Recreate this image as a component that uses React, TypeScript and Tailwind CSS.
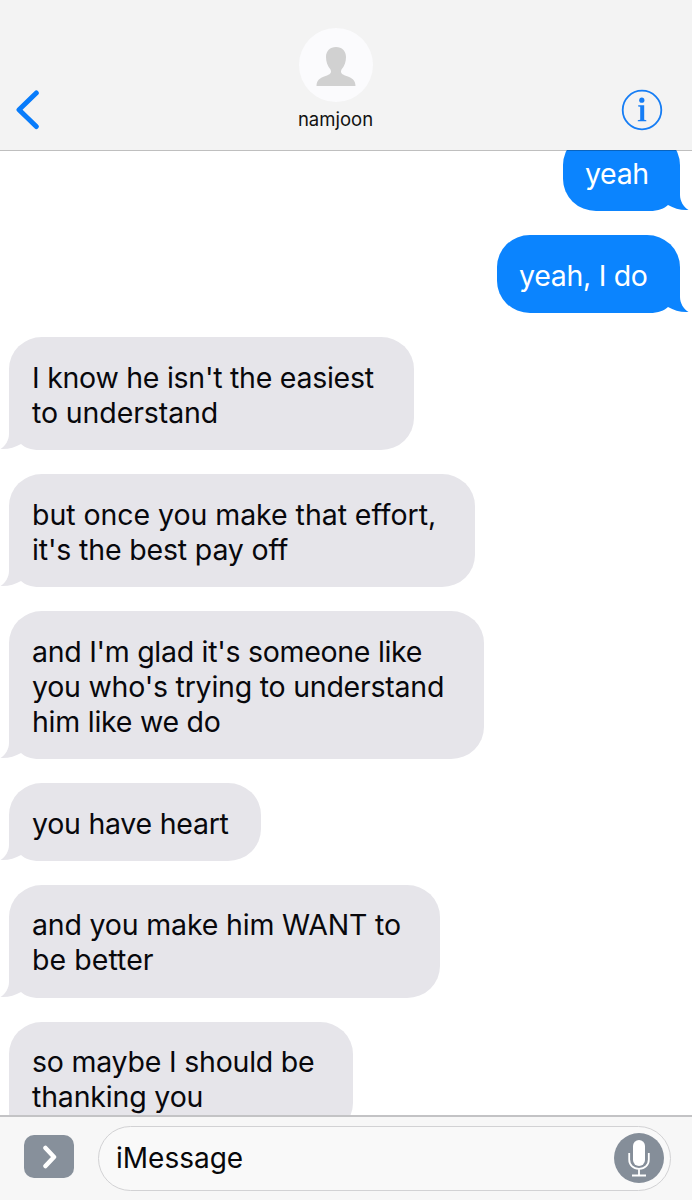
import { ReactNode } from "react";

type Line = { text: string; className: string };

type Message = {
  mine?: boolean;
  size: string;
  lines: Line[];
};

const messages: Message[] = [
  {
    mine: true,
    size: "w-[117px] pt-[23px] pb-5",
    lines: [{ text: "yeah", className: "tracking-[-0.35px]" }],
  },
  {
    mine: true,
    size: "w-[183px] pt-[23px] pb-5",
    lines: [{ text: "yeah, I do", className: "tracking-[-0.3px]" }],
  },
  {
    size: "w-[405px] pt-[23px] pb-5",
    lines: [
      { text: "I know he isn't the easiest", className: "tracking-[-0.26px]" },
      { text: "to understand", className: "tracking-[-0.1px]" },
    ],
  },
  {
    size: "w-[466px] pt-[23px] pb-5",
    lines: [
      { text: "but once you make that effort,", className: "tracking-[-0.05px]" },
      { text: "it's the best pay off", className: "tracking-[-0.16px]" },
    ],
  },
  {
    size: "w-[475px] pt-[23px] pb-5",
    lines: [
      { text: "and I'm glad it's someone like", className: "tracking-[-0.29px]" },
      { text: "you who's trying to understand", className: "tracking-[-0.23px]" },
      { text: "him like we do", className: "tracking-[-0.25px]" },
    ],
  },
  {
    size: "w-[252px] pt-[23px] pb-5",
    lines: [{ text: "you have heart", className: "tracking-[-0.25px]" }],
  },
  {
    size: "w-[431px] pt-[22px] pb-[21px]",
    lines: [
      { text: "and you make him WANT to", className: "tracking-[-0.18px]" },
      { text: "be better", className: "tracking-[0.05px]" },
    ],
  },
  {
    size: "w-[344px] pt-[22px] pb-[21px]",
    lines: [
      { text: "so maybe I should be", className: "tracking-[-0.22px]" },
      { text: "thanking you", className: "tracking-[-0.17px]" },
    ],
  },
];

function Tail({ mine }: { mine?: boolean }) {
  return (
    <svg
      viewBox="0 0 44 40"
      className={
        mine
          ? "absolute -right-[9px] bottom-0 h-10 w-11 -scale-x-100 text-[#0b84fe]"
          : "absolute bottom-0 -left-[9px] h-10 w-11 text-[#e6e5ea]"
      }
    >
      <path
        d="M9 0V24C9 30 5.500 36 0.5 39C8 39.500 15 37.500 21 34C25 37.500 30 40 40 40H44V0Z"
        fill="currentColor"
      />
    </svg>
  );
}

function Bubble({ mine, size, children }: { mine?: boolean; size: string; children: ReactNode }) {
  return (
    <div
      className={`relative shrink-0 rounded-[33px/32px] text-[28.5px] leading-[35px] whitespace-nowrap ${size} ${
        mine
          ? "mr-3 self-end bg-[#0b84fe] pl-[22px] text-white"
          : "ml-[9px] bg-[#e6e5ea] pl-[23px] text-[#08080c]"
      }`}
    >
      <Tail mine={mine} />
      <div className="relative">{children}</div>
    </div>
  );
}

function Header() {
  return (
    <header className="flex h-[150px] shrink-0 justify-between bg-[#f3f3f3]">
      <button className="mt-[89px] ml-[15px] h-[41px] w-[26px]" aria-label="Back">
        <svg viewBox="0 0 26 41" className="h-[41px] w-[26px]" fill="none">
          <path
            d="M21.3 4L4 20.7L21.3 37.5"
            stroke="#087cfb"
            strokeWidth="5"
            strokeLinecap="round"
            strokeLinejoin="round"
          />
        </svg>
      </button>
      <div className="ml-[9px] flex w-[150px] flex-col items-center pt-7">
        <svg viewBox="0 0 74 74" className="size-[74px]">
          <circle cx="37" cy="37" r="37" fill="#fbfbfd" />
          <path
            d="M37 19C43 19 47 23 47 29C47 34 45.500 38 42.500 41.500C41 45 43 46.500 47.500 48C53 50 56.500 52 56.500 58H17.500C17.500 52 21 50 26.500 48C31 46.500 33 45 31.500 41.500C28.500 38 27 34 27 29C27 23 31 19 37 19Z"
            fill="#d1d1d1"
          />
        </svg>
        <span className="mt-[5px] text-[18.5px] leading-6 text-[#111]">namjoon</span>
      </div>
      <svg viewBox="0 0 42 42" className="mt-[89px] mr-[29px] size-[42px]" fill="none">
        <circle cx="21" cy="21" r="19.300" stroke="#157df5" strokeWidth="1.800" />
        <circle cx="20.800" cy="11.200" r="2.600" fill="#157df5" />
        <path
          d="M17.200 16.200H23.200V30.700L25.300 31.200V32.300H16.800V31.200L19.200 30.700V17.800L17.200 17.400Z"
          fill="#157df5"
        />
      </svg>
    </header>
  );
}

function InputBar() {
  return (
    <footer className="flex h-[85px] shrink-0 border-t-2 border-[#c3c3c5] bg-[#f7f7f7]">
      <button
        className="mt-[18px] ml-6 flex h-[43px] w-[50px] items-center justify-center rounded-[10px] bg-[#87909b] pl-0.5"
        aria-label="Apps"
      >
        <svg viewBox="0 0 14 24" className="h-6 w-3.5" fill="none">
          <path
            d="M2.500 3L11 12L2.500 21"
            stroke="#fff"
            strokeWidth="4.500"
            strokeLinecap="round"
            strokeLinejoin="round"
          />
        </svg>
      </button>
      <div className="mt-[9px] ml-6 flex h-[65px] w-[573px] items-center justify-between rounded-full border border-[#d2d2d4] bg-[#f9f9f9] pr-1.5 pb-px pl-[17px]">
        <span className="text-[28px] leading-[35px] text-[#08080a]">iMessage</span>
        <svg viewBox="0 0 50 50" className="size-[50px]" fill="none">
          <circle cx="25" cy="25" r="25" fill="#858e99" />
          <rect x="19" y="7" width="12" height="26" rx="6" fill="#fff" />
          <path
            d="M15.200 20V26.500C15.200 32 19 35.800 25 35.800S34.800 32 34.800 26.500V20M25 36V42.500M18 42.500H32"
            stroke="#fff"
            strokeWidth="1.800"
          />
        </svg>
      </div>
    </footer>
  );
}

export default function App() {
  return (
    <div className="flex h-[1200px] w-[692px] flex-col overflow-hidden bg-white font-['Inter','Liberation_Sans',sans-serif]">
      <Header />
      <main className="relative flex min-h-0 flex-1 flex-col overflow-hidden">
        <div className="-mt-[17px] flex flex-col gap-6">
          {messages.map((message) => (
            <Bubble key={message.lines[0].text} mine={message.mine} size={message.size}>
              {message.lines.map((line) => (
                <p key={line.text} className={line.className}>
                  {line.text}
                </p>
              ))}
            </Bubble>
          ))}
        </div>
        <div className="absolute inset-x-0 top-0 h-px bg-black/25" />
      </main>
      <InputBar />
    </div>
  );
}
